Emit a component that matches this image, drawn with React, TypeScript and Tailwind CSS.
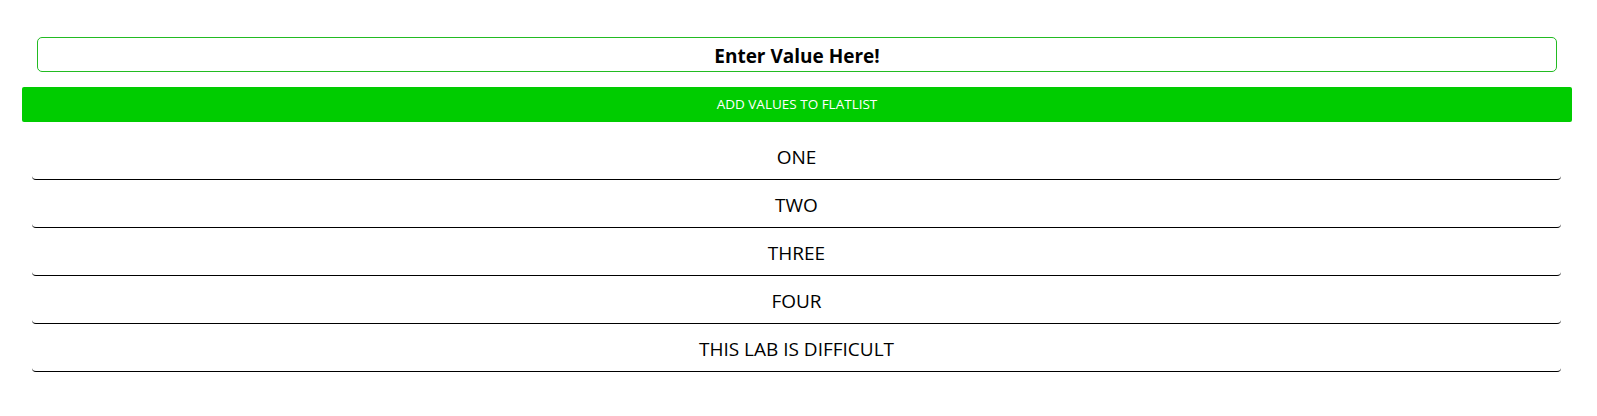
import React from "react";

const items = ["ONE", "TWO", "THREE", "FOUR", "THIS LAB IS DIFFICULT"];

export default function App() {
  return (
    <div
      className="w-[1597px] h-[416px] bg-white pt-[37px]"
      style={{ fontFamily: '"Open Sans", "Noto Sans", sans-serif' }}
    >
      <div className="ml-[37px] mr-[40px] h-[35px] border border-[#22bb22] rounded-[5px] flex items-center justify-center pt-[4px]">
        <span className="text-[19px] font-bold text-black leading-none">Enter Value Here!</span>
      </div>
      <div className="mt-[15px] ml-[22px] mr-[25px] h-[35px] bg-[#00cc00] rounded-[2px] flex items-center justify-center pt-[1px]">
        <span className="text-[13.5px] text-white leading-none">ADD VALUES TO FLATLIST</span>
      </div>
      <div className="mt-[10px] ml-[32px] mr-[36px] flex flex-col">
        {items.map((t) => (
          <div
            key={t}
            className="h-[48px] border-b border-black rounded-[4px] flex items-center justify-center pt-[3px]"
          >
            <span className="text-[19px] text-black leading-none">{t}</span>
          </div>
        ))}
      </div>
    </div>
  );
}
